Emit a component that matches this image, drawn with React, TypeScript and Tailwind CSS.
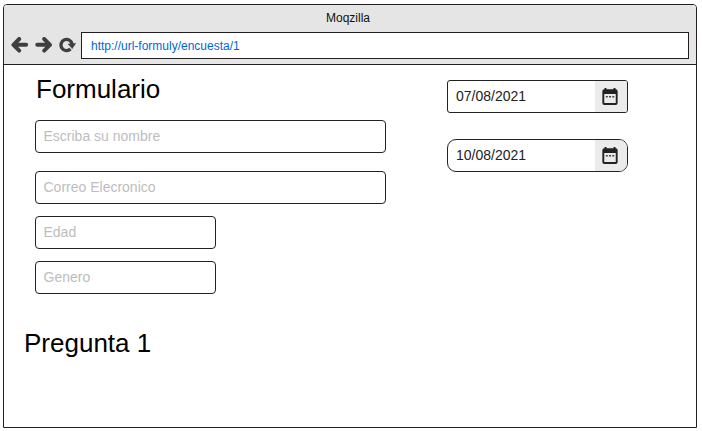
const fontStack = "font-['Liberation_Sans',Arial,sans-serif]";

function ArrowLeft() {
  return (
    <svg width="18" height="16" viewBox="0 0 18 16" className="block" fill="none" stroke="#3f3f3f" strokeLinejoin="round" strokeLinecap="round">
      <path d="M8.2 2 2.4 7.8 8.2 13.6M2.8 7.8H15.2" strokeWidth="3.9" />
    </svg>
  );
}

function ArrowRight() {
  return (
    <svg width="18" height="16" viewBox="0 0 18 16" className="block" fill="none" stroke="#3f3f3f" strokeLinejoin="round" strokeLinecap="round">
      <path d="M9.2 2 15 7.8 9.2 13.6M14.6 7.8H2.2" strokeWidth="3.9" />
    </svg>
  );
}

function Reload() {
  return (
    <svg width="18" height="16" viewBox="0 0 18 16" className="block">
      <path d="M11.5 12A5.6 5.6 0 1 1 13.1 7" fill="none" stroke="#3f3f3f" strokeWidth="3.3" />
      <path d="M9.2 7 16.6 6.4 13.2 11.6z" fill="#3f3f3f" stroke="#3f3f3f" strokeWidth="0.6" strokeLinejoin="round" />
    </svg>
  );
}

function CalendarIcon() {
  return (
    <svg width="20" height="20" viewBox="0 0 20 20" className="block">
      <path d="M5.5 1v3M14.5 1v3" stroke="#222" strokeWidth="2" />
      <rect x="3.3" y="3.3" width="13.4" height="13.7" rx="1" fill="none" stroke="#222" strokeWidth="1.9" />
      <path d="M3 3h14v4H3z" fill="#222" />
      <path d="M5.8 9h2v1.5h-2zM9 9h2v1.5H9zM12.2 9h2v1.5h-2z" fill="#444" />
    </svg>
  );
}

function Field({ label, className }: { label: string; className: string }) {
  return (
    <div className={`flex h-[33px] items-center rounded border border-[#222] bg-white pb-[2px] pl-[7.5px] text-sm text-[#bdbdbd] ${className}`}>
      {label}
    </div>
  );
}

function DateField({ value, className }: { value: string; className: string }) {
  return (
    <div className={`flex h-[33px] w-[181px] overflow-hidden border border-[#222] bg-white text-sm text-[#222] ${className}`}>
      <span className="flex flex-1 items-center pb-[2px] pl-2">{value}</span>
      <span className="flex w-8 items-center justify-center bg-[#ebebeb] pt-px pr-[2px]">
        <CalendarIcon />
      </span>
    </div>
  );
}

export default function App() {
  return (
    <div className={`h-[431px] w-[702px] bg-white pt-1 pl-[3px] ${fontStack}`}>
      <div className="flex h-[424px] w-[694px] flex-col overflow-hidden rounded-t-[4px] border border-[#231f20] bg-white">
        <header className="h-[60px] shrink-0 border-b border-[#231f20] bg-[#e5e5e5]">
          <div className="h-[27px] pr-1 pt-px text-center text-xs leading-6 text-[#111]">Moqzilla</div>
          <div className="flex h-[27px] items-center pr-[7px] pl-[7px]">
            <div className="flex w-[70px] shrink-0 gap-[6px] pb-px">
              <ArrowLeft />
              <ArrowRight />
              <Reload />
            </div>
            <div className="flex h-[27px] flex-1 items-center border border-[#231f20] bg-white pl-[9px] text-xs text-[#0066dd]">
              http://url-formuly/encuesta/1
            </div>
          </div>
        </header>
        <main className="flex">
          <section className="w-[443px] shrink-0 pl-[31px]">
            <h1 className="h-[55px] pt-[9px] pl-px text-[26px] leading-[30px] text-black">Formulario</h1>
            <Field label="Escriba su nombre" className="w-[351px]" />
            <Field label="Correo Elecronico" className="mt-[18px] w-[351px]" />
            <Field label="Edad" className="mt-3 w-[181px]" />
            <Field label="Genero" className="mt-3 w-[181px]" />
            <h2 className="-ml-[11px] mt-[34px] text-[26px] leading-[30px] text-black">Pregunta 1</h2>
          </section>
          <section className="pt-[15px]">
            <DateField value="07/08/2021" className="rounded-[3px]" />
            <DateField value="10/08/2021" className="mt-[26px] rounded-[9px]" />
          </section>
        </main>
      </div>
    </div>
  );
}
